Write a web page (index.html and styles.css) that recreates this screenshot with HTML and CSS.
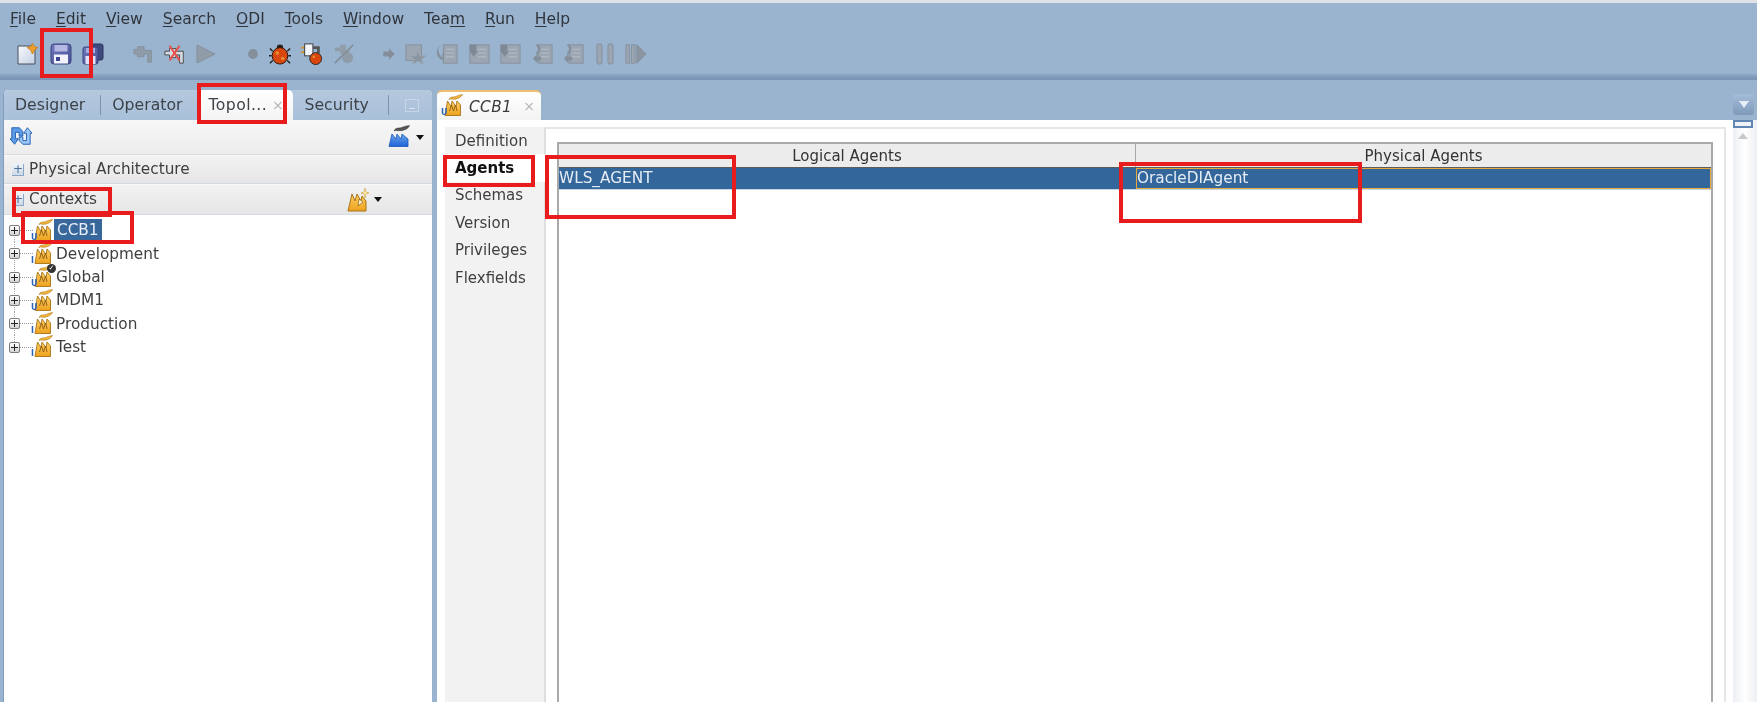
FILE: index.html
```html
<!DOCTYPE html>
<html lang="en">
<head>
<meta charset="utf-8">
<title>ODI Studio</title>
<link rel="stylesheet" href="styles.css">
</head>
<body>
<svg class="defs" width="0" height="0" aria-hidden="true">
  <defs>
    <linearGradient id="og" x1="0" y1="0" x2="0" y2="1"><stop offset="0" stop-color="#ffcf66"/><stop offset="1" stop-color="#eda21e"/></linearGradient>
    <linearGradient id="bg" x1="0" y1="0" x2="0" y2="1"><stop offset="0" stop-color="#6aa6ee"/><stop offset="1" stop-color="#1f63d6"/></linearGradient>
    <linearGradient id="fl" x1="0" y1="0" x2="1" y2="1"><stop offset="0" stop-color="#6f78bc"/><stop offset="1" stop-color="#4c5398"/></linearGradient>
    <linearGradient id="pg" x1="0" y1="0" x2="1" y2="1"><stop offset="0" stop-color="#f8fafc"/><stop offset="1" stop-color="#c3d0e6"/></linearGradient>
    <symbol id="factory" viewBox="0 0 20 22" preserveAspectRatio="none">
      <path d="M2 21.500 L4.500 7 L8 12.500 L9 7 L13 12.500 L14 7 L17.500 11 V21.500Z" fill="url(#og)" stroke="#a97314" stroke-width=".9"/>
      <path d="M6 5.500 C8 1.500 11 4 14 2 C16 1 18 1 19.500 .5 C18.500 3 15 4.500 13 5 C10 6 8 4 6 5.500Z" fill="#f6b93f" stroke="#a97314" stroke-width=".6"/>
      <path d="M6.500 17 L8.500 11 L10.500 17 L12.500 11 L14 17" fill="none" stroke="#8a5a10" stroke-width=".9"/>
    </symbol>
    <symbol id="factory-blue" viewBox="0 0 22 22">
      <path d="M1 21.500 L4 9 L8 14 L9 9 L13 14 L14 9 L20 14 V21.500Z" fill="url(#bg)" stroke="#1a55b8" stroke-width=".8"/>
      <path d="M6 6 C8 1.500 12 4 15 2 C17 1 20 1 21.500 .5 C20.500 3.500 17 5 14 5.500 C11 6.500 8 4.500 6 6Z" fill="#555" stroke="#333" stroke-width=".5"/>
    </symbol>
    <symbol id="factory-new" viewBox="0 0 22 24">
      <path d="M1 23 L5 6 L8 13 L10 6 L14 13 L15 8 L19 13 V23Z" fill="url(#og)" stroke="#a97314"/>
      <path d="M11 18 L12 11 L16 14Z" fill="#fff6d8" stroke="#8a5a10" stroke-width=".7"/>
      <path d="M18 0 L19 4 L22 5 L19 6 L18 10 L17 6 L14 5 L17 4Z" fill="#ffe9a8" stroke="#c79020" stroke-width=".5"/>
    </symbol>
    <symbol id="refresh" viewBox="0 0 24 24">
      <path d="M2 3 H10 L14 7 V12 H10 V8 H6 V15 H9 L5 21 L0 15 H2Z" fill="#5d9be6" stroke="#1c5cb2"/>
      <path d="M22 21 H14 L10 17 V13 H14 V17 H18 V9 H15 L19 3 L24 9 H22Z" fill="#9cc6f5" stroke="#1c5cb2"/>
    </symbol>
    <symbol id="new" viewBox="0 0 22 22">
      <path d="M1 3 H15 L18 6 V21 H1Z" fill="url(#pg)" stroke="#4a4f5a"/>
      <path d="M15.500 0 L17 3.500 L21 4.500 L17.500 7 L15.500 11 L13.500 7 L10 4.500 L14 3.500Z" fill="#ef9f2f" stroke="#c67c14" stroke-width=".8"/>
    </symbol>
    <symbol id="save" viewBox="0 0 22 22">
      <rect x="1" y="1" width="20" height="20" rx="3" fill="url(#fl)" stroke="#3c437f"/>
      <rect x="4.500" y="2" width="13" height="6.500" fill="#b4b8e2"/>
      <rect x="4" y="11.500" width="14" height="9" fill="#f2f3fb"/>
      <rect x="6" y="14" width="4" height="4" fill="#3d4490"/>
    </symbol>
    <symbol id="saveall" viewBox="0 0 22 22">
      <rect x="8" y="1" width="13" height="16" rx="2" fill="#3f4a7d" stroke="#2d3463"/>
      <rect x="1" y="4" width="15" height="17" rx="2" fill="url(#fl)" stroke="#3c437f"/>
      <rect x="4" y="5" width="9" height="5" fill="#a8ade0"/>
      <rect x="3.500" y="13" width="10" height="8" fill="#dfe2f6"/>
    </symbol>
    <symbol id="plug" viewBox="0 0 24 22">
      <path d="M1 6 H5 V3 H12 V7 H20 V20 H16 V11 H12 V14 H5 V11 H1Z" fill="#909ca8" stroke="#848f9b"/>
    </symbol>
    <symbol id="plugx" viewBox="0 0 24 22">
      <path d="M1 8 H6 V5 H13 V8 H21 V21 H17 V12 H13 V15 H6 V12 H1Z" fill="#d7dce3" stroke="#444"/>
      <path d="M6 2 L17 18 M17 2 L6 18" stroke="#e7504c" stroke-width="2.200"/>
    </symbol>
    <symbol id="play" viewBox="0 0 22 22"><path d="M2 2 L20 11 L2 20Z" fill="#909ca8" stroke="#858f9b"/></symbol>
    <symbol id="dot" viewBox="0 0 22 22"><circle cx="11" cy="11" r="6" fill="#858f9b"/></symbol>
    <symbol id="bug" viewBox="0 0 24 24">
      <path d="M4 9 L1 6 M20 9 L23 6 M3 14 H0 M21 14 H24 M4 19 L1 22 M20 19 L23 22" stroke="#222" stroke-width="1.600"/>
      <circle cx="12" cy="5" r="3.500" fill="#222"/>
      <ellipse cx="12" cy="14" rx="8.500" ry="9" fill="#d9470f" stroke="#2a1408"/>
      <circle cx="9" cy="11" r="2" fill="#e98a2c"/><circle cx="15" cy="17" r="2" fill="#e98a2c"/>
    </symbol>
    <symbol id="plugbug" viewBox="0 0 24 24">
      <path d="M0 5 H4 M0 10 H4" stroke="#d29320" stroke-width="2"/>
      <rect x="4" y="1" width="9" height="13" fill="#f2f4f7" stroke="#333"/>
      <path d="M13 5 H19 V11" fill="none" stroke="#555" stroke-width="3"/>
      <ellipse cx="16" cy="17" rx="6.500" ry="6.500" fill="#d9470f" stroke="#222"/>
      <circle cx="14" cy="15" r="1.500" fill="#e98a2c"/>
    </symbol>
    <symbol id="hatch" viewBox="0 0 24 24">
      <path d="M2 5 H8 V2 H14 V8 H18 V12 H8 V9 H2Z" fill="#909ca8"/>
      <circle cx="16" cy="16" r="6" fill="#909ca8"/>
      <path d="M2 22 L22 2" stroke="#858f9b" stroke-width="2"/>
    </symbol>
    <symbol id="arrow" viewBox="0 0 22 22"><path d="M4 8 H11 V4 L18 11 L11 18 V14 H4Z" fill="#858f9b"/></symbol>
    <symbol id="stardoc" viewBox="0 0 24 24">
      <rect x="1" y="2" width="17" height="17" fill="#9ba6b2" stroke="#858f9b"/>
      <path d="M14 8 L16 14 L23 14 L18 18 L20 23 L14 20 L8 23 L10 18 L5 14 L12 14Z" fill="#8b95a1" stroke="#9ba6b2"/>
    </symbol>
    <symbol id="doc1" viewBox="0 0 24 24">
      <rect x="8" y="2" width="15" height="20" fill="#9ba6b2" stroke="#858f9b"/>
      <path d="M11 7 H20 M11 11 H20 M11 15 H20" stroke="#aeb8c3" stroke-width="1.400"/>
      <path d="M5 2 C1 6 2 12 7 16 V11 L9 13 L7 19 C1 16 -2 8 5 2Z" fill="#858f9b"/>
    </symbol>
    <symbol id="doc2" viewBox="0 0 24 24">
      <rect x="2" y="2" width="21" height="20" fill="#9ba6b2" stroke="#858f9b"/>
      <path d="M11 7 H20 M11 11 H20 M11 15 H20" stroke="#aeb8c3" stroke-width="1.400"/>
      <path d="M2 2 H9 V9 L11 9 L6 15 L2 9Z" fill="#7f8995"/>
    </symbol>
    <symbol id="doc3" viewBox="0 0 24 24">
      <rect x="8" y="2" width="15" height="20" fill="#9ba6b2" stroke="#858f9b"/>
      <path d="M11 7 H20 M11 11 H20 M11 15 H20" stroke="#aeb8c3" stroke-width="1.400"/>
      <path d="M7 12 L2 17 L7 22 V19 H11 V15 H7Z" fill="#858f9b"/>
      <path d="M6 2 C10 4 10 9 6 12" fill="none" stroke="#858f9b" stroke-width="2.400"/>
    </symbol>
    <symbol id="pause" viewBox="0 0 22 22"><rect x="3" y="1" width="5" height="20" rx="1.500" fill="#9ba6b2" stroke="#858f9b"/><rect x="14" y="1" width="5" height="20" rx="1.500" fill="#9ba6b2" stroke="#858f9b"/></symbol>
    <symbol id="resume" viewBox="0 0 24 22"><rect x="1" y="1" width="4" height="20" fill="#9ba6b2" stroke="#858f9b"/><rect x="7" y="1" width="4" height="20" fill="#9ba6b2" stroke="#858f9b"/><path d="M13 1 L23 11 L13 21Z" fill="#8b95a1" stroke="#858f9b"/></symbol>
  </defs>
</svg>

<div class="app">
  <header class="head">
    <nav class="menubar">
      <span><u>F</u>ile</span><span><u>E</u>dit</span><span><u>V</u>iew</span><span><u>S</u>earch</span><span><u>O</u>DI</span><span><u>T</u>ools</span><span><u>W</u>indow</span><span>Tea<u>m</u></span><span><u>R</u>un</span><span><u>H</u>elp</span>
    </nav>
    <div class="toolbar">
      <div class="tgroup g1">
        <svg class="ti"><use href="#new"/></svg>
        <svg class="ti"><use href="#save"/></svg>
        <svg class="ti"><use href="#saveall"/></svg>
      </div>
      <div class="tgroup g2">
        <svg class="ti"><use href="#plug"/></svg>
        <svg class="ti"><use href="#plugx"/></svg>
        <svg class="ti"><use href="#play"/></svg>
      </div>
      <div class="tgroup g3">
        <svg class="ti small"><use href="#dot"/></svg>
        <svg class="ti"><use href="#bug"/></svg>
        <svg class="ti"><use href="#plugbug"/></svg>
        <svg class="ti"><use href="#hatch"/></svg>
      </div>
      <div class="tgroup g4">
        <svg class="ti small"><use href="#arrow"/></svg>
        <svg class="ti"><use href="#stardoc"/></svg>
        <svg class="ti"><use href="#doc1"/></svg>
        <svg class="ti"><use href="#doc2"/></svg>
        <svg class="ti"><use href="#doc2"/></svg>
        <svg class="ti"><use href="#doc3"/></svg>
        <svg class="ti"><use href="#doc3"/></svg>
        <svg class="ti"><use href="#pause"/></svg>
        <svg class="ti"><use href="#resume"/></svg>
      </div>
    </div>
  </header>

  <main class="work">
    <section class="left">
      <div class="navtabs">
        <span class="nt w-designer">Designer</span>
        <i class="sep"></i>
        <span class="nt w-operator">Operator</span>
        <span class="nt active">Topol...<b class="x">×</b></span>
        <span class="nt w-security">Security</span>
        <i class="sep"></i>
        <span class="minim"><i></i></span>
      </div>
      <div class="navbar">
        <svg class="refresh"><use href="#refresh"/></svg>
        <svg class="fblue"><use href="#factory-blue"/></svg>
        <i class="caret"></i>
      </div>
      <div class="acc short">
        <span class="pm"></span><span>Physical Architecture</span>
      </div>
      <div class="acc tall">
        <span class="pm"></span><span>Contexts</span>
        <svg class="fnew"><use href="#factory-new"/></svg>
        <i class="caret"></i>
      </div>
      <div class="tree">
        <div class="row"><span class="tw"></span><i class="dots"></i><span class="fi"><svg><use href="#factory"/></svg><em class="u">U</em></span><span class="lbl sel">CCB1</span></div>
        <div class="row"><span class="tw"></span><i class="dots"></i><span class="fi"><svg><use href="#factory"/></svg><em>I</em></span><span class="lbl">Development</span></div>
        <div class="row"><span class="tw"></span><i class="dots"></i><span class="fi"><svg><use href="#factory"/></svg><em class="u">U</em><b class="chk">✓</b></span><span class="lbl">Global</span></div>
        <div class="row"><span class="tw"></span><i class="dots"></i><span class="fi"><svg><use href="#factory"/></svg><em class="u">U</em></span><span class="lbl">MDM1</span></div>
        <div class="row"><span class="tw"></span><i class="dots"></i><span class="fi"><svg><use href="#factory"/></svg><em>I</em></span><span class="lbl">Production</span></div>
        <div class="row"><span class="tw"></span><i class="dots"></i><span class="fi"><svg><use href="#factory"/></svg><em>I</em></span><span class="lbl">Test</span></div>
      </div>
    </section>

    <section class="right">
      <div class="doctabs">
        <div class="doctab">
          <span class="fi"><svg><use href="#factory"/></svg><em class="u">U</em></span>
          <span class="docname">CCB1</span><b class="x">×</b>
        </div>
      </div>
      <div class="docbody">
        <ul class="sidetabs">
          <li>Definition</li>
          <li class="on">Agents</li>
          <li>Schemas</li>
          <li>Version</li>
          <li>Privileges</li>
          <li>Flexfields</li>
        </ul>
        <div class="pane">
          <div class="table">
            <div class="thead"><div class="c1">Logical Agents</div><div class="c2">Physical Agents</div></div>
            <div class="trow"><div class="c1">WLS_AGENT</div><div class="c2 focus">OracleDIAgent</div></div>
          </div>
        </div>
      </div>
    </section>

    <aside class="strip">
      <div class="dd"><i></i></div>
      <div class="track">
        <div class="thumb"></div>
        <i class="up"></i>
      </div>
    </aside>
  </main>

  <i class="mark m-save"></i>
  <i class="mark m-topol"></i>
  <i class="mark m-contexts"></i>
  <i class="mark m-ccb1"></i>
  <i class="mark m-agents"></i>
  <i class="mark m-wls"></i>
  <i class="mark m-oracle"></i>
</div>
</body>
</html>
```
FILE: styles.css
```css
* { box-sizing: border-box; }
html, body { margin: 0; height: 100%; overflow: hidden; background: #fff; }
.defs { position: absolute; }
.app {
  position: relative;
  width: 1757px;
  height: 702px;
  display: flex;
  flex-direction: column;
  background: #9ab4d0;
  font: 15.3px/1.2 "DejaVu Sans", sans-serif;
  color: #3a3a3a;
  filter: blur(0.5px);
}
.head {
  height: 80px;
  flex: none;
  border-top: 3px solid #dfe3e8;
  background: linear-gradient(#9ab4d0 0, #9ab4d0 70px, #8aa5c3 72px, #7993b2 76px, #7d97b6 77px);
}
.menubar { display: flex; gap: 20px; padding: 7px 0 0 10px; height: 33px; font-size: 15.5px; color: #30353c; }
.menubar u { text-underline-offset: 2px; }
.toolbar { display: flex; align-items: center; height: 36px; }
.tgroup { display: flex; align-items: center; }
.g1 { margin-left: 17px; gap: 10.5px; }
.g2 { margin-left: 29px; gap: 9px; }
.g3 { margin-left: 27px; gap: 10px; }
.g4 { margin-left: 25px; gap: 9.5px; }
.ti { width: 22px; height: 22px; flex: none; }
.ti.small { width: 18px; height: 18px; margin-right: -3px; }

.work { flex: 1; display: flex; min-height: 0; padding-left: 3px; }
.left {
  width: 429px;
  flex: none;
  margin-top: 10px;
  display: flex;
  flex-direction: column;
  background: #fff;
  border-radius: 5px 5px 0 0;
  border-left: 1px solid #7f9ec0;
}
.navtabs {
  height: 30px;
  flex: none;
  display: flex;
  align-items: center;
  background: linear-gradient(#b4c8de, #a9c0da);
  border-radius: 5px 5px 0 0;
  font-size: 15.7px;
  color: #3d4349;
}
.nt { display: block; }
.w-designer { margin-left: 11px; }
.w-operator { margin-left: 11px; }
.w-security { margin-left: 11px; }
.sep { width: 1px; height: 20px; background: #7f93a8; margin-left: 15px; flex: none; }
.w-security + .sep { margin-left: 19px; }
.active {
  align-self: stretch;
  display: flex;
  align-items: center;
  width: 95px;
  margin-left: 16px;
  padding-left: 10px;
  background: linear-gradient(#fff, #f3f3f3);
  border-radius: 5px 5px 0 0;
  letter-spacing: .4px;
}
.x { font-weight: normal; color: #b5b5b5; margin-left: 5px; font-size: 14px; }
.minim { width: 14px; height: 13px; margin-left: 16px; border: 1px solid #c7d6e6; display: flex; align-items: flex-end; justify-content: center; padding-bottom: 2px; }
.minim i { width: 6px; height: 1px; background: #d8e2ee; display: block; }

.navbar {
  height: 35px;
  flex: none;
  display: flex;
  align-items: center;
  padding: 0 8px 0 6px;
  background: linear-gradient(#f7f7f7, #ececec);
  border-bottom: 1px solid #dcdcdc;
}
.refresh { width: 22px; height: 22px; margin-top: -2px; }
.fblue { width: 22px; height: 22px; margin: -2px 0 0 auto; }
.caret { width: 0; height: 0; margin-left: 6px; border: 4px solid transparent; border-top: 5px solid #111; border-bottom: 0; }
.acc {
  height: 30px;
  flex: none;
  display: flex;
  align-items: center;
  padding: 0 50px 0 8px;
  background: linear-gradient(#f2f2f2, #e6e6e6);
  border-top: 1px solid #fafafa;
  border-bottom: 1px solid #d4dbe3;
  color: #3f3f3f;
}
.acc.short { height: 29px; }
.acc.tall { height: 31px; }
.pm { position: relative; width: 12px; height: 12px; margin-right: 5px; background: linear-gradient(#eef3f9, #cdd9e8); border-bottom: 1px solid #8aa5c6; border-right: 1px solid #8aa5c6; }
.pm::before { content: "+"; position: absolute; left: 1px; top: -3px; font-size: 12px; line-height: 16px; color: #4d6f98; }
.fnew { width: 22px; height: 24px; flex: none; margin-left: auto; }
.acc .caret { margin-left: 5px; }

.tree { padding-top: 4px; }
.row {
  height: 23.3px;
  display: flex;
  align-items: center;
  padding-left: 5px;
  color: #3f3f3f;
  background: repeating-linear-gradient(#a8a8a8 0 1px, transparent 1px 2px) 10px 0 / 1px 100% no-repeat;
}
.row:first-child { background-position: 10px bottom; background-size: 1px 50%; }
.row:last-child { background-size: 1px 50%; }
.tw {
  position: relative;
  width: 11px;
  height: 11px;
  flex: none;
  border: 1px solid #7d7d7d;
  border-radius: 2px;
  background: linear-gradient(#fff, #d3d3d3);
}
.tw::before { content: ""; position: absolute; left: 1px; right: 1px; top: 4px; height: 1px; background: #222; }
.tw::after { content: ""; position: absolute; top: 1px; bottom: 1px; left: 4px; width: 1px; background: #222; }
.dots { width: 13px; flex: none; border-top: 1px dotted #999; }
.fi { position: relative; width: 20px; height: 22px; flex: none; display: block; top: -1px; }
.fi svg { width: 20px; height: 22px; display: block; }
.fi em { position: absolute; left: -2px; bottom: -1px; font: bold 8px/9px "DejaVu Sans", sans-serif; color: #2b66b5; }
.chk { position: absolute; right: -3px; top: -1px; width: 9px; height: 9px; border-radius: 50%; background: #333; color: #fff; font: bold 7px/9px "DejaVu Sans", sans-serif; text-align: center; }
.lbl { margin-left: 3px; }
.lbl.sel { margin-left: 1px; padding: 2px 3px; background: #38689b; color: #e8eef6; }

.right { flex: 1; min-width: 0; margin-left: 5px; display: flex; flex-direction: column; }
.doctabs { height: 40px; flex: none; padding-top: 10px; }
.doctab {
  width: 104px;
  height: 30px;
  display: flex;
  align-items: center;
  padding-left: 6px;
  background: linear-gradient(#fff, #f3f3f3);
  border-top: 2px solid #efbe6e;
  border-radius: 5px 5px 0 0;
}
.docname { font-style: italic; margin: 2px 0 0 6px; letter-spacing: .4px; }
.doctab .x { margin-left: 11px; }
.docbody {
  flex: 1;
  min-height: 0;
  display: flex;
  background: #fff;
  padding: 7px 7px 0 8px;
}
.sidetabs {
  list-style: none;
  margin: 0;
  width: 101px;
  flex: none;
  padding: 0 0 0 10px;
  background: #f2f2f2;
  color: #3f3f3f;
  font-size: 15px;
}
.sidetabs li { height: 27.4px; display: flex; align-items: center; }
.sidetabs .on { font-weight: bold; color: #111; background: #fff; margin-left: -10px; padding-left: 10px; margin-right: -2px; position: relative; }
.pane { flex: 1; min-width: 0; padding: 13px 11px 0; border-top: 2px solid #e6e6e6; border-left: 2px solid #dedede; border-right: 2px solid #e6e6e6; margin-left: -2px; }
.table { height: 100%; border: 2px solid #a9a9a9; border-bottom: 0; display: flex; flex-direction: column; }
.thead, .trow { display: flex; flex: none; }
.thead { height: 23px; background: #ececec; color: #333; font-size: 15px; }
.thead > div { display: flex; align-items: center; justify-content: center; }
.thead .c2 { border-left: 1px solid #a9a9a9; }
.c1 { width: 576px; flex: none; }
.c2 { flex: 1; min-width: 0; }
.trow { height: 23px; background: #33669a; color: #e6edf5; border-top: 1px solid #5c5c5c; border-bottom: 1px solid #c8d4e0; }
.trow > div { display: flex; align-items: center; }
.trow .focus { border: 1px solid #e8a93f; margin-left: 1px; }

.strip { width: 24px; flex: none; padding-top: 14px; display: flex; flex-direction: column; align-items: flex-start; }
.dd { width: 21px; height: 21px; flex: none; border-radius: 3px; background: linear-gradient(#a5bcd6, #7f9abb); display: flex; align-items: center; justify-content: center; }
.dd i { width: 0; height: 0; border: 5px solid transparent; border-top: 7px solid #e8eef6; border-bottom: 0; }
.track { flex: 1; align-self: stretch; margin-top: 5px; background: linear-gradient(90deg, #eceff3, #fff 50%, #eceff3); display: flex; flex-direction: column; }
.thumb { width: 20px; height: 8px; flex: none; border: 2px solid #5f85b2; background: #eef3f8; }
.up { width: 0; height: 0; margin: 5px 0 0 5px; border: 5px solid transparent; border-bottom: 6px solid #c9c9c9; border-top: 0; }

.mark { position: absolute; border: 4px solid #e81c1c; display: block; }
.m-save { left: 40px; top: 28px; width: 53px; height: 50px; }
.m-topol { left: 197px; top: 83px; width: 90px; height: 41px; }
.m-contexts { left: 12px; top: 187px; width: 100px; height: 30px; }
.m-ccb1 { left: 21px; top: 211px; width: 113px; height: 33px; }
.m-agents { left: 443px; top: 155px; width: 92px; height: 32px; }
.m-wls { left: 545px; top: 155px; width: 191px; height: 64px; }
.m-oracle { left: 1119px; top: 162px; width: 243px; height: 61px; }
```
